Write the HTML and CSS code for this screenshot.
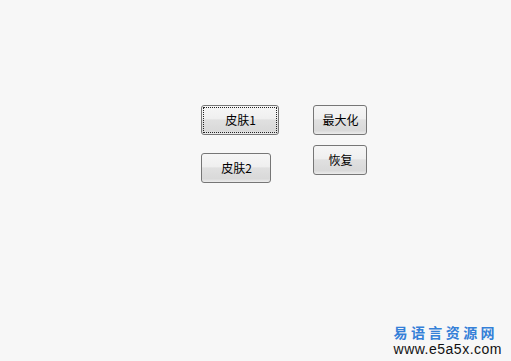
FILE: index.html
```html
<!DOCTYPE html>
<html lang="zh">
<head>
<meta charset="utf-8">
<title>皮肤</title>
<link rel="stylesheet" href="styles.css">
</head>
<body>
<div class="page">
  <div class="buttons">
    <div class="col col-left">
      <button class="btn btn-skin1 focused"><span class="focus">皮肤1</span></button>
      <button class="btn btn-skin2">皮肤2</button>
    </div>
    <div class="col col-right">
      <button class="btn btn-small">最大化</button>
      <button class="btn btn-small">恢复</button>
    </div>
  </div>
  <div class="logo">
    <div class="logo-cn">易语言资源网</div>
    <div class="logo-url">www.e5a5x.com</div>
  </div>
</div>
</body>
</html>
```
FILE: styles.css
```css
html, body {
  margin: 0;
  padding: 0;
  background: #f7f7f7;
}
.page {
  width: 511px;
  height: 361px;
  display: flex;
  flex-direction: column;
  box-sizing: border-box;
}
.buttons {
  display: flex;
  padding: 105px 0 0 201px;
  gap: 34px;
}
.col {
  display: flex;
  flex-direction: column;
}
.col-left { gap: 18px; }
.col-right { gap: 10px; }
.btn {
  margin: 0;
  height: 30px;
  box-sizing: border-box;
  border: 1px solid #767676;
  border-radius: 3px;
  background: linear-gradient(to bottom, #f6f6f6 0%, #efefef 45%, #e0e0e0 50%, #d9d9d9 88%, #ececec 100%);
  font-family: "Noto Sans CJK SC", "Noto Sans", sans-serif;
  font-size: 12px;
  color: #000;
  padding: 0 0 0 1px;
  display: flex;
  align-items: center;
  justify-content: center;
  line-height: 1;
}
.btn-skin1 { width: 78px; padding: 1px; }
.btn-skin2 { width: 70px; }
.btn-small { width: 54px; }
.focus {
  flex: 1;
  align-self: stretch;
  border: 1px dotted #222;
  display: flex;
  align-items: center;
  justify-content: center;
  padding-left: 1px;
}
.logo {
  margin-top: auto;
  align-self: flex-end;
  padding: 0 9px 4px 0;
  display: flex;
  flex-direction: column;
  align-items: flex-start;
}
.logo-cn {
  font-family: "Noto Sans CJK SC", sans-serif;
  font-size: 14px;
  font-weight: 700;
  line-height: 17px;
  letter-spacing: 3.4px;
  color: #3580d8;
  padding-left: 2px;
}
.logo-url {
  font-family: "Liberation Sans", Arial, sans-serif;
  font-size: 14px;
  line-height: 16px;
  color: #111;
  letter-spacing: 0.5px;
  padding-left: 2px;
}
```
